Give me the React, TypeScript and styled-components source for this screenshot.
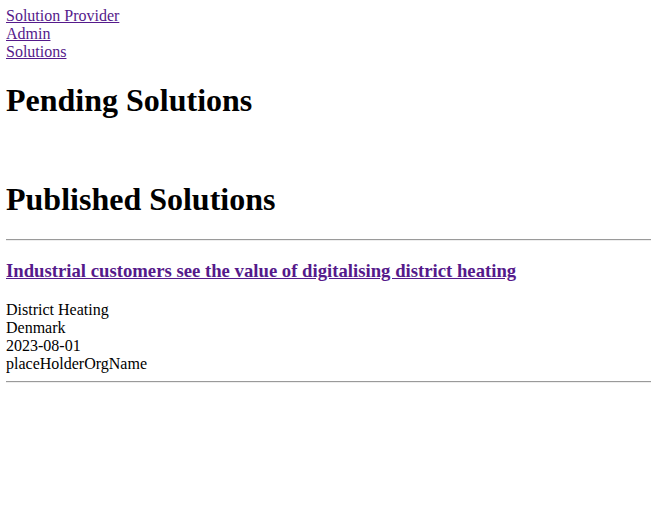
import React from "react";
import styled, { createGlobalStyle } from "styled-components";

const GlobalStyle = createGlobalStyle`
  html, body {
    background: #ffffff;
  }
  body {
    margin: 7px 0 6px 6px;
    font-family: "Liberation Serif", "Times New Roman", serif;
    font-size: 16px;
    color: #000000;
  }
`;

const Nav = styled.nav`
  display: flex;
  flex-direction: column;
  align-items: flex-start;
`;

const NavLink = styled.a`
  color: #551a8b;
  text-decoration: underline;
  line-height: normal;
`;

const Heading = styled.h1`
  font-size: 32px;
  font-weight: bold;
  margin: 21.44px 0;
  line-height: normal;
`;

const PendingList = styled.div`
  min-height: 18.4px;
`;

const Rule = styled.hr`
  margin: 8px 0;
  border: none;
  border-top: 1px solid #9a9a9a;
  border-bottom: 1px solid #eeeeee;
  height: 0;
`;

const SolutionTitle = styled.h3`
  font-size: 18.72px;
  font-weight: bold;
  margin: 18.72px 0;
  line-height: normal;
`;

const TitleLink = styled.a`
  color: #551a8b;
  text-decoration: underline;
`;

const Meta = styled.div`
  line-height: normal;
`;

type Solution = {
  title: string;
  category: string;
  country: string;
  date: string;
  org: string;
};

const published: Solution[] = [
  {
    title: "Industrial customers see the value of digitalising district heating",
    category: "District Heating",
    country: "Denmark",
    date: "2023-08-01",
    org: "placeHolderOrgName",
  },
];

export default function App() {
  return (
    <>
      <GlobalStyle />
      <Nav>
        <NavLink href="#">Solution Provider</NavLink>
        <NavLink href="#">Admin</NavLink>
        <NavLink href="#">Solutions</NavLink>
      </Nav>
      <Heading>Pending Solutions</Heading>
      <PendingList />
      <Heading>Published Solutions</Heading>
      <Rule />
      {published.map((s) => (
        <article key={s.title}>
          <SolutionTitle>
            <TitleLink href="#">{s.title}</TitleLink>
          </SolutionTitle>
          <Meta>{s.category}</Meta>
          <Meta>{s.country}</Meta>
          <Meta>{s.date}</Meta>
          <Meta>{s.org}</Meta>
          <Rule />
        </article>
      ))}
    </>
  );
}
